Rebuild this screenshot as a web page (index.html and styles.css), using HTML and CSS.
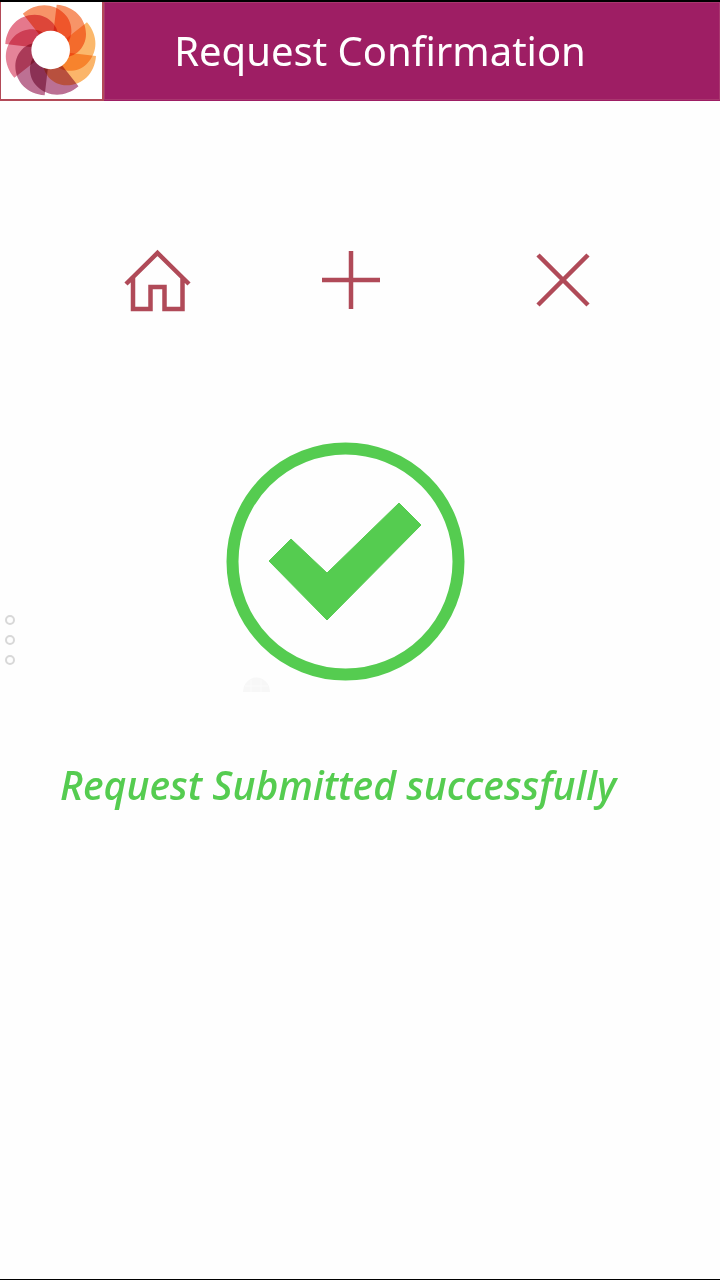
FILE: index.html
```html
<!DOCTYPE html>
<html lang="en">
<head>
<meta charset="utf-8">
<meta name="viewport" content="width=device-width, initial-scale=1">
<title>Request Confirmation</title>
<link rel="stylesheet" href="styles.css">
</head>
<body>
<header class="header">
  <div class="logo">
    <svg viewBox="3 6 303 291" role="img" aria-label="Logo">
      <defs>
        <path id="petal" d="M18-136C70-132 106-96 106-48C106-26 97-8 81 7Q68 18 50 22L0 0L9-60Z"/>
      </defs>
      <g class="petals" transform="translate(152 150)">
        <use href="#petal" fill="#f79468"/>
        <use href="#petal" fill="#fbb86c" transform="rotate(45)"/>
        <use href="#petal" fill="#fbb56a" transform="rotate(90)"/>
        <use href="#petal" fill="#bb7094" transform="rotate(135)"/>
        <use href="#petal" fill="#bd7093" transform="rotate(180)"/>
        <use href="#petal" fill="#e58499" transform="rotate(225)"/>
        <use href="#petal" fill="#e5788c" transform="rotate(270)"/>
        <use href="#petal" fill="#f79468" transform="rotate(315)"/>
      </g>
      <circle cx="152" cy="150" r="58" fill="#fff"/>
    </svg>
  </div>
  <h1 class="title">Request Confirmation</h1>
</header>
<main class="content">
  <nav class="actions" aria-label="Actions">
    <button class="action" type="button" aria-label="Home">
      <svg class="icon" viewBox="0 0 68 68"><path d="M3 38L34.500 7L66 38M10 32V63H27.500V41H41.500V63H59.500V32"/></svg>
    </button>
    <button class="action" type="button" aria-label="Add">
      <svg class="icon" viewBox="0 0 68 68"><path d="M34 5V63M5 34H63"/></svg>
    </button>
    <button class="action" type="button" aria-label="Close">
      <svg class="icon" viewBox="0 0 68 68"><path d="M10 9L60 59M60 9L10 59"/></svg>
    </button>
  </nav>
  <svg class="success" viewBox="0 0 240 252" role="img" aria-label="Success">
    <circle cx="120.500" cy="121.500" r="113" fill="none" stroke="#55cc50" stroke-width="12"/>
    <path d="M44 121L66 99L102 133L174 63L196 85L102 180Z" fill="#55cc50" stroke="#55cc50" stroke-linejoin="round"/>
    <path d="M18 252A13 14 0 0 1 45 252Z" fill="#f7f7f7"/>
    <path d="M20 246H43M26 240V252M36 240V252" fill="none" stroke="#fbfbfb"/>
  </svg>
  <p class="message">Request Submitted successfully</p>
</main>
<button class="handle" type="button" aria-label="Open side panel">
  <span class="dot"></span><span class="dot"></span><span class="dot"></span>
</button>
</body>
</html>
```
FILE: styles.css
```css
* {
  box-sizing: border-box;
}

body {
  margin: 0;
  min-height: 100vh;
  display: flex;
  flex-direction: column;
  position: relative;
  border-bottom: 1px solid #000;
  background: #fefefe;
  font-family: "Noto Sans", "Open Sans", sans-serif;
}

.header {
  display: flex;
  border-top: 2px solid #000;
  background: #9e1e64;
}

.logo {
  flex: none;
  width: 104px;
  height: 99px;
  border: solid #b34a58;
  border-width: 0 2px 2px 1px;
  background: #fff;
}

.logo svg {
  display: block;
  width: 100%;
  height: 100%;
}

.petals {
  isolation: isolate;
}

.petals use {
  mix-blend-mode: multiply;
}

.title {
  flex: 1;
  margin: 0 0 1px;
  padding-right: 64px;
  border: 1px solid #a9376f;
  color: #fff;
  font-size: 40px;
  font-weight: 400;
  line-height: 96px;
  text-align: center;
}

.content {
  flex: 1;
  display: flex;
  flex-direction: column;
  padding-top: 145px;
}

.actions {
  display: grid;
  grid-template-columns: 194fr 194fr 228fr;
  justify-items: center;
  padding: 0 44px 0 60px;
}

.action {
  padding: 0;
  border: 0;
  background: none;
  cursor: pointer;
}

.icon {
  display: block;
  width: 68px;
  height: 68px;
  fill: none;
  stroke: #b04a58;
  stroke-width: 4.5;
}

.success {
  align-self: center;
  width: 240px;
  height: 252px;
  margin: 126px 30px 0 0;
}

.message {
  margin: 65px 60px 0;
  color: #55cc50;
  font-family: "Open Sans", "Noto Sans", sans-serif;
  font-size: 39px;
  font-style: italic;
  font-weight: 600;
  line-height: 56px;
}

.handle {
  position: absolute;
  top: 50%;
  left: 0;
  transform: translateY(-50%);
  display: flex;
  flex-direction: column;
  gap: 10px;
  padding: 5px;
  border: 0;
  background: none;
}

.dot {
  width: 10px;
  height: 10px;
  border: 2px solid #d8d8d8;
  border-radius: 50%;
}
```
